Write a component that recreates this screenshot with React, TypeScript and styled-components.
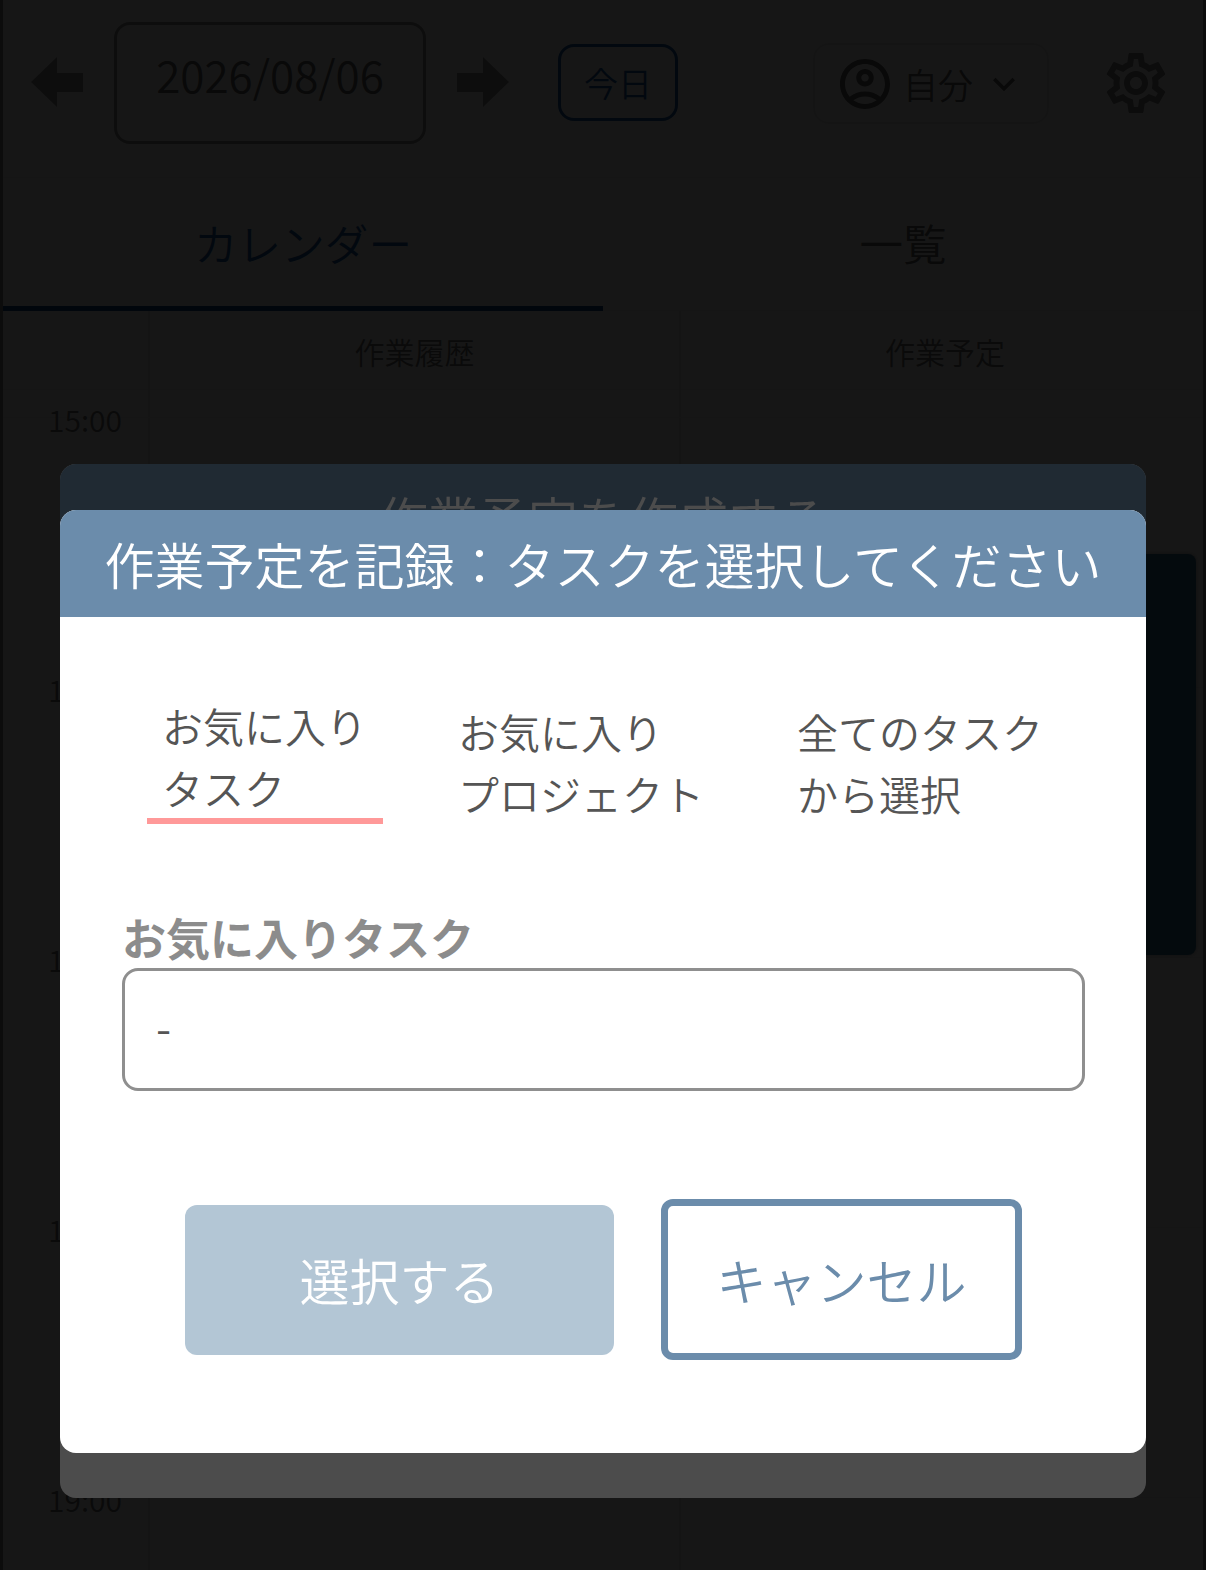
import React from "react";
import styled, { createGlobalStyle } from "styled-components";
import { MdOutlineSettings, MdOutlineAccountCircle, MdKeyboardArrowDown } from "react-icons/md";

const Global = createGlobalStyle`
  html, body { margin: 0; padding: 0; background: #888; }
  body { font-family: "Noto Sans CJK JP", "Noto Sans", sans-serif; font-weight: 350; }
  * { box-sizing: border-box; }
`;

const Viewport = styled.div`
  position: relative;
  width: 1206px;
  height: 1570px;
  overflow: hidden;
  padding: 0 3px;
`;

const Page = styled.div`
  background: #fff;
  height: 100%;
  color: #555;
`;

const TopBar = styled.div`
  height: 178px;
  display: flex;
  align-items: flex-start;
  border-bottom: 1px solid #eee;
  padding: 22px 0 0 28px;
`;

const Arrow = styled.svg`
  width: 52px;
  height: 52px;
  margin-top: 35px;
  flex: none;
  fill: #999;
`;

const DateBox = styled.div`
  width: 312px;
  height: 122px;
  margin: 0 31px 0 31px;
  flex: none;
  border: 3px solid #999;
  border-radius: 16px;
  font-size: 44px;
  line-height: 1;
  text-align: center;
  padding-top: 27px;
  color: #666;
`;

const TodayButton = styled.div`
  width: 120px;
  height: 77px;
  margin: 22px 0 0 49px;
  flex: none;
  border: 3px solid #1f5fa8;
  border-radius: 16px;
  color: #1f5fa8;
  font-size: 34px;
  display: flex;
  align-items: center;
  justify-content: center;
`;

const UserSelect = styled.div`
  width: 236px;
  height: 81px;
  margin: 21px 0 0 135px;
  flex: none;
  border: 2px solid #e8e8e8;
  border-radius: 16px;
  display: flex;
  align-items: center;
  padding-left: 20px;
  font-size: 35px;
  color: #666;
`;

const UserName = styled.span`
  margin: 0 9px 0 8px;
  white-space: nowrap;
`;

const Gear = styled.div`
  margin: 25px 0 0 51px;
  line-height: 0;
  color: #888;
`;

const TabBar = styled.div`
  height: 133px;
  display: flex;
`;

const Tab = styled.div<{ $active?: boolean }>`
  flex: 1;
  display: flex;
  align-items: center;
  justify-content: center;
  font-size: 43.6px;
  color: ${(p) => (p.$active ? "#1f5fa8" : "#666")};
  border-bottom: 5px solid ${(p) => (p.$active ? "#164b8f" : "#eee")};
  ${(p) => (p.$active ? "" : "border-bottom-width: 1px; padding-bottom: 4px;")}
`;

const Calendar = styled.div`
  position: relative;
  display: grid;
  grid-template-columns: 145px 531px 1fr;
  grid-template-rows: 107px;
  grid-auto-rows: 270px;
`;

const HeadCell = styled.div<{ $lined?: boolean; $inset?: number }>`
  border-left: ${(p) => (p.$lined ? "2px solid #e8e8e8" : "none")};
  border-bottom: 1px solid #eee;
  display: flex;
  justify-content: center;
  padding: 19px 0 0 ${(p) => p.$inset ?? 0}px;
  line-height: 42px;
  font-size: 30px;
  color: #777;
  background: linear-gradient(#eee, #eee) 0 78px / 100% 1px no-repeat;
`;

const TimeCell = styled.div`
  position: relative;
`;

const TimeText = styled.span`
  position: absolute;
  top: -21px;
  left: 45px;
  font-size: 30px;
  line-height: 44px;
  color: #777;
`;

const GridCell = styled.div`
  border-left: 2px solid #e8e8e8;
  border-bottom: 1px solid #eee;
`;

const EventCard = styled.div`
  position: absolute;
  top: 243px;
  right: 7px;
  width: 200px;
  height: 401px;
  background: #37789b;
  border-radius: 8px;
  box-shadow: 0 0 4px #999;
`;

const Overlay = styled.div`
  position: absolute;
  inset: 0;
  background: rgba(0, 0, 0, 0.7);
`;

const Modal = styled.div<{ $top: number; $height: number }>`
  position: absolute;
  left: 60px;
  width: 1086px;
  top: ${(p) => p.$top}px;
  height: ${(p) => p.$height}px;
  background: #fff;
  border-radius: 16px;
  overflow: hidden;
`;

const ModalHeader = styled.div`
  height: 107px;
  background: #6b8cab;
  color: #fff;
  font-size: 50px;
  line-height: 107px;
  text-align: center;
  white-space: nowrap;
`;

const ModalBody = styled.div`
  padding: 77px 0 0 62px;
`;

const PickerTabs = styled.div`
  display: flex;
  align-items: flex-end;
  gap: 60px;
  margin-left: 25px;
`;

const PickerTab = styled.div<{ $active?: boolean; $width: number }>`
  width: ${(p) => p.$width}px;
  padding: 0 15px;
  font-size: 41px;
  line-height: 62px;
  color: #555;
  white-space: pre-line;
  height: 130px;
  transform: translateY(${(p) => (p.$active ? "0" : "6px")});
  border-bottom: ${(p) => (p.$active ? "6px solid #ff9999" : "none")};
`;

const FieldLabel = styled.div`
  margin-top: 83px;
  font-size: 44px;
  line-height: 60px;
  height: 60px;
  font-weight: 700;
  color: #8c8c8c;
`;

const SelectBox = styled.div`
  width: 963px;
  height: 123px;
  margin-top: 1px;
  border: 3px solid #8f8f8f;
  border-radius: 16px;
  padding-left: 31px;
  font-size: 44px;
  line-height: 110px;
  color: #555;
`;

const Actions = styled.div`
  display: flex;
  align-items: center;
  gap: 47px;
  margin: 108px 0 0 63px;
`;

const PrimaryButton = styled.div`
  width: 429px;
  height: 150px;
  background: #b3c6d5;
  border-radius: 12px;
  color: #fff;
  font-size: 50px;
  padding-bottom: 2px;
  display: flex;
  align-items: center;
  justify-content: center;
`;

const CancelButton = styled.div`
  width: 361px;
  height: 161px;
  border: 7px solid #6b8cab;
  border-radius: 12px;
  color: #6b8cab;
  font-size: 50px;
  padding-bottom: 2px;
  display: flex;
  align-items: center;
  justify-content: center;
`;

const hours = ["15:00", "16:00", "17:00", "18:00", "19:00"];

export default function App() {
  return (
    <Viewport>
      <Global />
      <Page>
        <TopBar>
          <Arrow viewBox="0 0 52 52">
            <polygon points="0,25 26,0 26,16 52,16 52,35 26,35 26,50" />
          </Arrow>
          <DateBox>2026/08/06</DateBox>
          <Arrow viewBox="0 0 52 52">
            <polygon points="52,25 26,0 26,16 0,16 0,35 26,35 26,50" />
          </Arrow>
          <TodayButton>今日</TodayButton>
          <UserSelect>
            <MdOutlineAccountCircle size={60} />
            <UserName>自分</UserName>
            <MdKeyboardArrowDown size={44} />
          </UserSelect>
          <Gear>
            <MdOutlineSettings size={72} />
          </Gear>
        </TopBar>
        <TabBar>
          <Tab $active>カレンダー</Tab>
          <Tab>一覧</Tab>
        </TabBar>
        <Calendar>
          <HeadCell />
          <HeadCell $lined>作業履歴</HeadCell>
          <HeadCell $lined $inset={6}>作業予定</HeadCell>
          {hours.map((h) => (
            <React.Fragment key={h}>
              <TimeCell>
                <TimeText>{h}</TimeText>
              </TimeCell>
              <GridCell />
              <GridCell />
            </React.Fragment>
          ))}
          <EventCard />
        </Calendar>
      </Page>
      <Overlay />
      <Modal $top={464} $height={1034}>
        <ModalHeader>作業予定を作成する</ModalHeader>
      </Modal>
      <Overlay />
      <Modal $top={510} $height={943}>
        <ModalHeader>作業予定を記録：タスクを選択してください</ModalHeader>
        <ModalBody>
          <PickerTabs>
            <PickerTab $active $width={236}>{"お気に入り\nタスク"}</PickerTab>
            <PickerTab $width={279}>{"お気に入り\nプロジェクト"}</PickerTab>
            <PickerTab $width={290}>{"全てのタスク\nから選択"}</PickerTab>
          </PickerTabs>
          <FieldLabel>お気に入りタスク</FieldLabel>
          <SelectBox>-</SelectBox>
          <Actions>
            <PrimaryButton>選択する</PrimaryButton>
            <CancelButton>キャンセル</CancelButton>
          </Actions>
        </ModalBody>
      </Modal>
    </Viewport>
  );
}
